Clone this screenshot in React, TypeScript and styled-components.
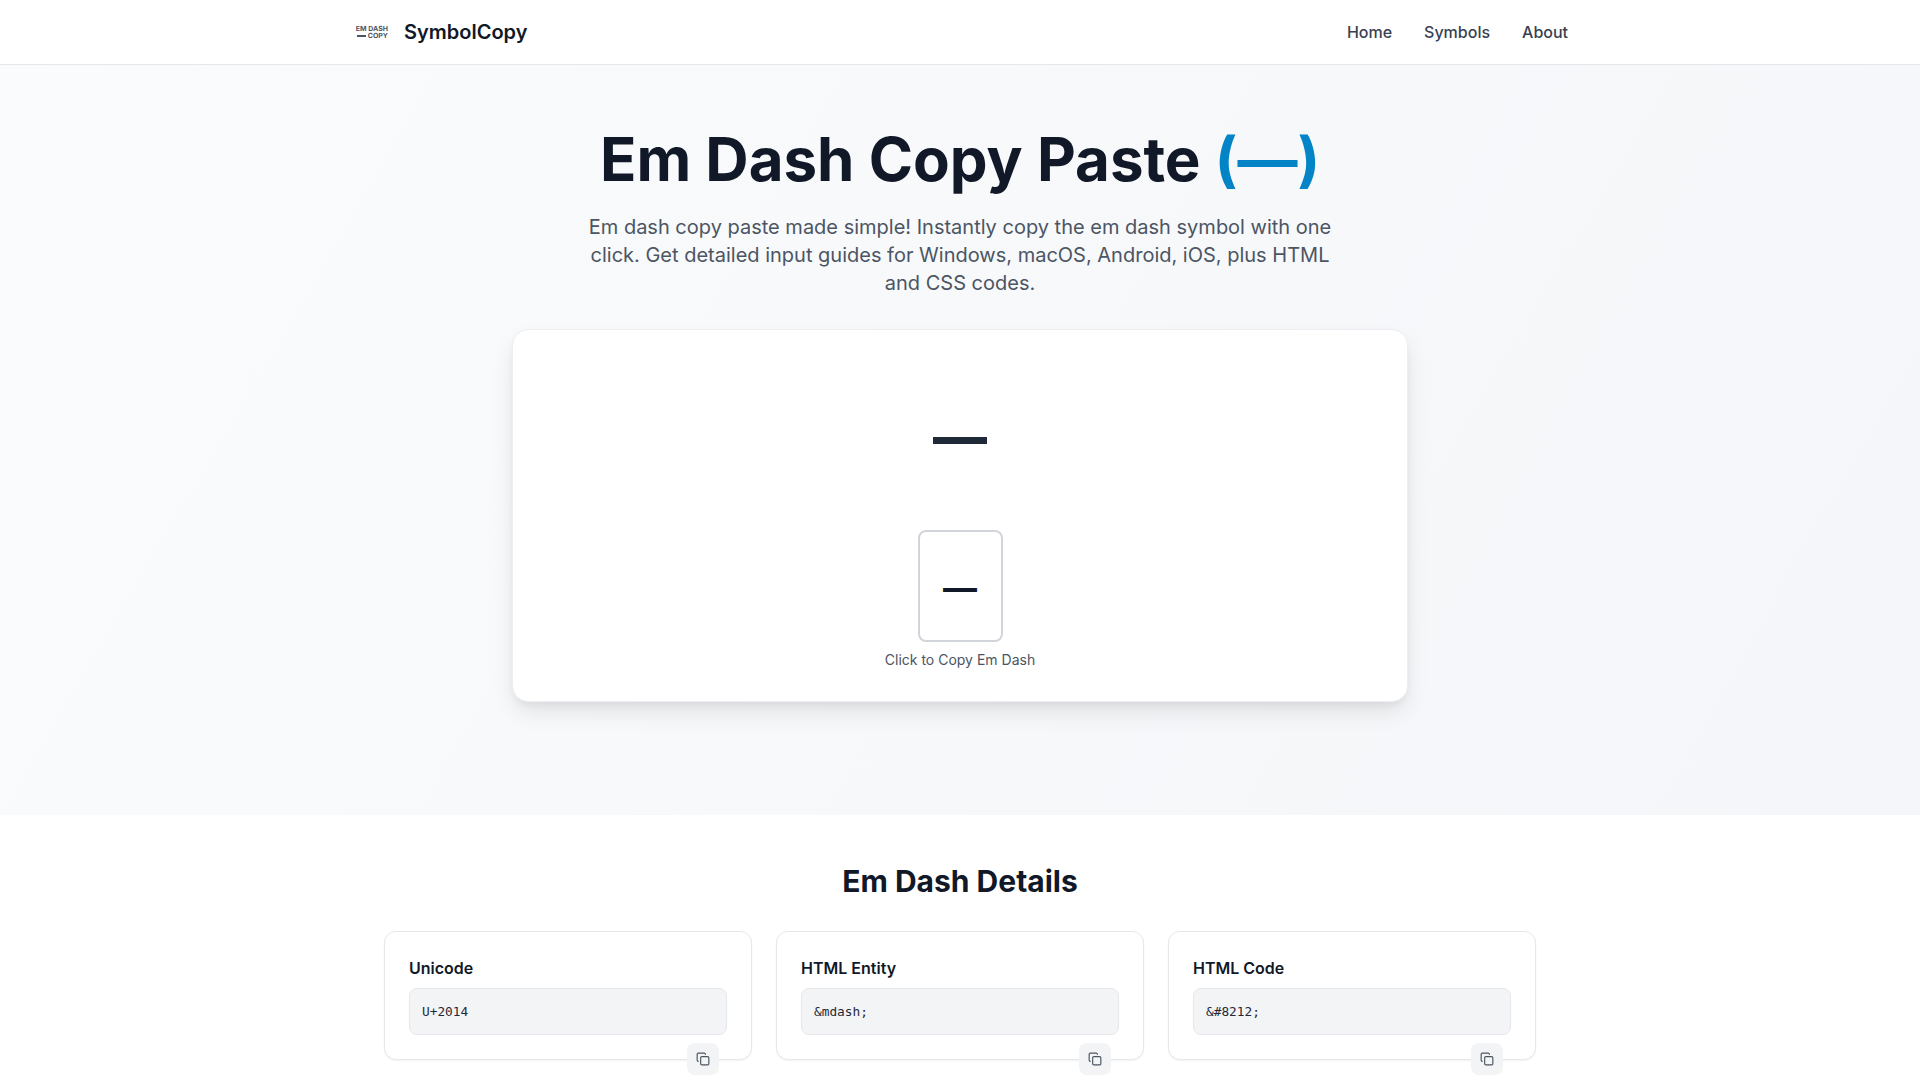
import React from "react";
import styled, { createGlobalStyle } from "styled-components";
import { Copy } from "lucide-react";

const Global = createGlobalStyle`
  html, body { margin: 0; padding: 0; background: #fff; }
  body { font-family: Inter, "Noto Sans", sans-serif; overflow: hidden; }
  * { box-sizing: border-box; }
`;

const Header = styled.header`
  height: 65px;
  background: #fff;
  border-bottom: 1px solid #e5e7eb;
`;
const HeaderInner = styled.div`
  max-width: 1280px;
  height: 64px;
  margin: 0 auto;
  padding: 0 32px;
  display: flex;
  align-items: center;
  justify-content: space-between;
`;
const Brand = styled.a`
  display: flex;
  align-items: center;
  gap: 16px;
  margin-left: 4px;
  font-size: 20px;
  font-weight: 600;
  color: #111827;
`;
const Logo = styled.span`
  display: flex;
  flex-direction: column;
  align-items: flex-end;
  width: 32px;
  font-size: 7px;
  line-height: 7.5px;
  font-weight: 700;
  color: #4b5563;
  white-space: nowrap;
  text-rendering: geometricPrecision;
`;
const LogoLine = styled.span`
  display: flex;
  align-items: center;
`;
const LogoDash = styled.span`
  width: 9px;
  height: 1.5px;
  margin-right: 2px;
  background: #4b5563;
`;
const Nav = styled.nav`
  display: flex;
  gap: 32px;
`;
const NavLink = styled.a`
  font-size: 16px;
  font-weight: 500;
  color: #374151;
`;

const Hero = styled.section`
  height: 750px;
  padding-top: 64px;
  background: linear-gradient(120deg, #fafbfc 0%, #f5f6f9 100%);
  display: flex;
  flex-direction: column;
  align-items: center;
`;
const Title = styled.h1`
  margin: 0 0 24px;
  font-size: 60px;
  line-height: 60px;
  font-weight: 700;
  color: #111827;
`;
const Accent = styled.span`
  color: #0284c7;
`;
const Lead = styled.p`
  margin: 0 0 32px;
  width: 768px;
  font-size: 20px;
  line-height: 28px;
  color: #4b5563;
  text-align: center;
`;
const CopyCard = styled.div`
  width: 896px;
  height: 373px;
  background: #fff;
  border: 1px solid #eceef1;
  border-radius: 16px;
  box-shadow: 0 12px 24px -3px rgba(0, 0, 0, 0.1), 0 4px 8px -2px rgba(0, 0, 0, 0.06);
  display: flex;
  flex-direction: column;
  align-items: center;
`;
const BigDash = styled.div`
  margin-top: 57px;
  height: 103px;
  font-size: 54px;
  line-height: 100px;
  font-weight: 800;
  color: #1f2937;
`;
const CopyButton = styled.button`
  margin-top: 40px;
  width: 85px;
  height: 112px;
  padding: 2px 0 0;
  background: #fff;
  border: 2px solid #d1d5db;
  border-radius: 8px;
  font-family: inherit;
  font-size: 34px;
  font-weight: 700;
  color: #111827;
`;
const CopyLabel = styled.div`
  margin-top: 8px;
  font-size: 14px;
  line-height: 20px;
  color: #4b5563;
`;

const Details = styled.section`
  padding: 48px 0;
  background: #fff;
`;
const DetailsTitle = styled.h2`
  margin: 0 0 32px;
  font-size: 30px;
  line-height: 36px;
  font-weight: 700;
  color: #111827;
  text-align: center;
`;
const Grid = styled.div`
  width: 1152px;
  margin: 0 auto;
  display: grid;
  grid-template-columns: repeat(3, 1fr);
  gap: 24px;
`;
const Card = styled.div`
  height: 129px;
  padding: 24px;
  background: #fff;
  border: 1px solid #e5e7eb;
  border-radius: 12px;
  box-shadow: 0 1px 2px rgba(0, 0, 0, 0.05);
`;
const CardTitle = styled.h3`
  margin: 0 0 8px;
  font-size: 16px;
  line-height: 24px;
  font-weight: 600;
  color: #111827;
`;
const CodeBox = styled.div`
  position: relative;
  height: 47px;
  padding: 0 12px;
  display: flex;
  align-items: center;
  background: #f3f4f6;
  border: 1px solid #e5e7eb;
  border-radius: 8px;
  font-family: "DejaVu Sans Mono", monospace;
  font-size: 12.8px;
  color: #1f2937;
`;
const IconButton = styled.button`
  position: absolute;
  top: calc(100% + 9px);
  right: 7px;
  width: 32px;
  height: 32px;
  padding: 0;
  display: flex;
  align-items: center;
  justify-content: center;
  background: #f3f4f6;
  border: 0;
  border-radius: 8px;
  color: #4b5563;
`;

const items = [
  { label: "Unicode", code: "U+2014" },
  { label: "HTML Entity", code: "&mdash;" },
  { label: "HTML Code", code: "&#8212;" },
];

export default function App() {
  return (
    <>
      <Global />
      <Header>
        <HeaderInner>
          <Brand>
            <Logo>
              <LogoLine>EM DASH</LogoLine>
              <LogoLine>
                <LogoDash />
                COPY
              </LogoLine>
            </Logo>
            SymbolCopy
          </Brand>
          <Nav>
            <NavLink>Home</NavLink>
            <NavLink>Symbols</NavLink>
            <NavLink>About</NavLink>
          </Nav>
        </HeaderInner>
      </Header>
      <Hero>
        <Title>
          Em Dash Copy Paste <Accent>(—)</Accent>
        </Title>
        <Lead>
          Em dash copy paste made simple! Instantly copy the em dash symbol with one click. Get
          detailed input guides for Windows, macOS, Android, iOS, plus HTML and CSS codes.
        </Lead>
        <CopyCard>
          <BigDash>—</BigDash>
          <CopyButton>—</CopyButton>
          <CopyLabel>Click to Copy Em Dash</CopyLabel>
        </CopyCard>
      </Hero>
      <Details>
        <DetailsTitle>Em Dash Details</DetailsTitle>
        <Grid>
          {items.map((it) => (
            <Card key={it.label}>
              <CardTitle>{it.label}</CardTitle>
              <CodeBox>
                {it.code}
                <IconButton>
                  <Copy size={14} />
                </IconButton>
              </CodeBox>
            </Card>
          ))}
        </Grid>
      </Details>
    </>
  );
}
